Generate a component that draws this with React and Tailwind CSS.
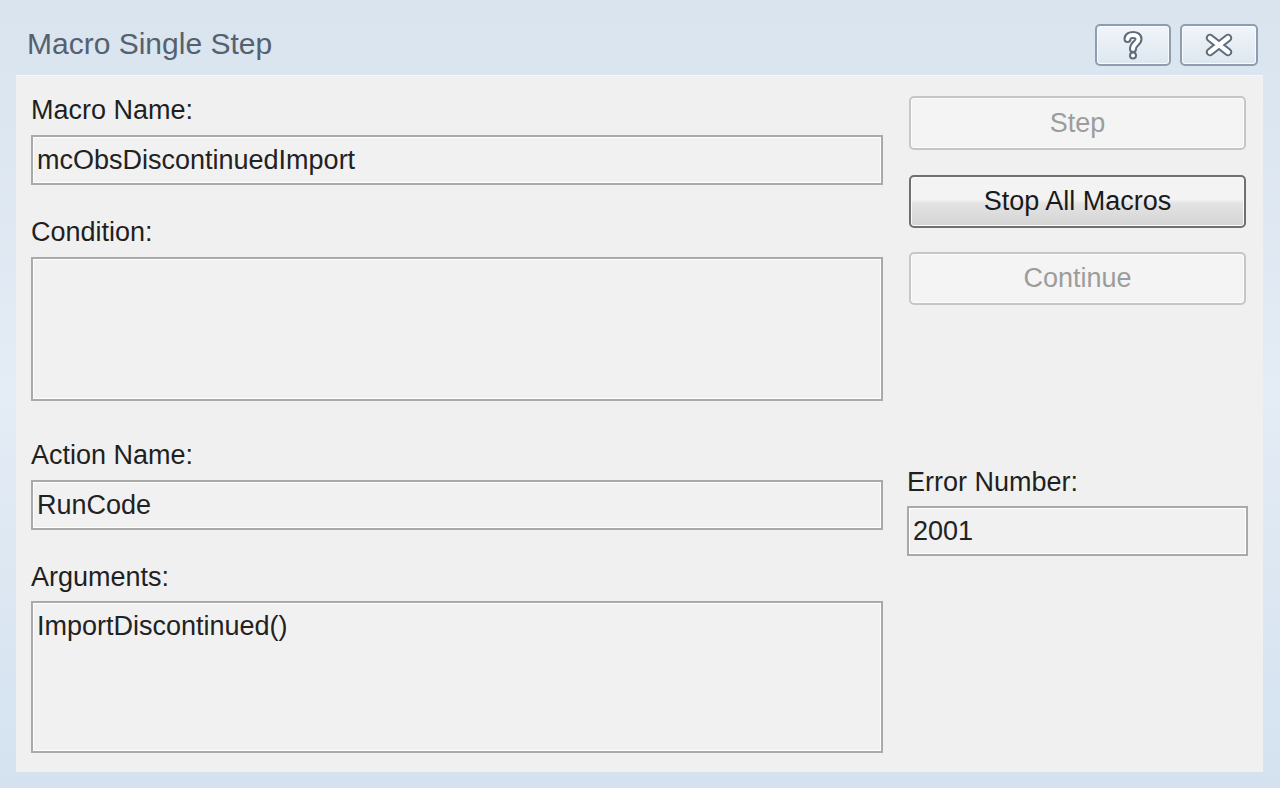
import React from 'react';

const font = { fontFamily: '"Liberation Sans", Arial, sans-serif' };

function Label({ children, className = '' }) {
  return (
    <div className={`text-[27px] leading-[32px] text-[#1f1f1f] ${className}`}>{children}</div>
  );
}

function Field({ value, className = '', multiline = false }) {
  return (
    <div
      className={`border-2 border-[#a9a9a9] bg-[#f1f1f1] shadow-[inset_1px_1px_0_#ffffff,inset_-1px_-1px_0_#ffffff] px-[4px] text-[27px] leading-[32px] text-[#222] ${
        multiline ? 'pt-[7px]' : 'flex items-center'
      } ${className}`}
    >
      {value}
    </div>
  );
}

function Button({ children, disabled, className = '' }) {
  return disabled ? (
    <div
      className={`flex items-center justify-center rounded-[5px] border-2 border-[#c4c7ca] bg-[#f4f4f4] shadow-[inset_0_0_0_1px_#fbfbfb] text-[27px] text-[#9c9c9c] ${className}`}
    >
      {children}
    </div>
  ) : (
    <div
      className={`flex items-center justify-center rounded-[5px] border-2 border-[#6f6f6f] bg-gradient-to-b from-[#f3f3f3] from-45% via-[#e3e3e3] via-55% to-[#d4d4d4] shadow-[inset_0_0_0_1px_#fafafa] text-[27px] text-[#1a1a1a] ${className}`}
    >
      {children}
    </div>
  );
}

function TitleButton({ children }) {
  return (
    <div className="flex h-[42px] items-center justify-center rounded-[5px] border-2 border-[#8f9db0] bg-gradient-to-b from-[#f1f5f9] to-[#dde6ef] shadow-[inset_0_0_0_1px_#f8fbfd]">
      {children}
    </div>
  );
}

export default function App() {
  return (
    <div
      style={font}
      className="flex h-[788px] w-[1280px] flex-col bg-gradient-to-b from-[#d9e4ef] via-[#e4ecf5] to-[#d4e2f0] overflow-hidden"
    >
      {/* barra de título */}
      <div className="flex h-[75px] shrink-0 items-start justify-between">
        <div className="pl-[27px] pt-[26px] text-[30px] leading-[36px] text-[#55616e]">Macro Single Step</div>
        <div className="mr-[22px] mt-[24px] flex gap-[9px]">
          <div className="w-[76px]">
            <TitleButton>
              <svg width="26" height="32" viewBox="0 0 26 32">
                <g fill="none" strokeLinecap="round" strokeLinejoin="round">
                  <path d="M7.5 10 C7.5 4.5 18.5 4.5 18.5 10 C18.5 14.5 13 14 13 20" stroke="#5d6b7b" strokeWidth="8" />
                  <path d="M7.5 10 C7.5 4.5 18.5 4.5 18.5 10 C18.5 14.5 13 14 13 20" stroke="#ffffff" strokeWidth="4" />
                  <path d="M13 26.5 L13 26.6" stroke="#5d6b7b" strokeWidth="8" />
                  <path d="M13 26.5 L13 26.6" stroke="#ffffff" strokeWidth="4" />
                </g>
              </svg>
            </TitleButton>
          </div>
          <div className="w-[78px]">
            <TitleButton>
              <svg width="32" height="26" viewBox="0 0 32 26">
                <g fill="none" strokeLinecap="round">
                  <path d="M7 6 L25 20 M25 6 L7 20" stroke="#5d6b7b" strokeWidth="8.5" />
                  <path d="M7 6 L25 20 M25 6 L7 20" stroke="#ffffff" strokeWidth="4.5" />
                </g>
              </svg>
            </TitleButton>
          </div>
        </div>
      </div>

      {/* área cliente */}
      <div className="ml-[16px] flex h-[697px] w-[1247px] shrink-0 bg-[#f0f0f0] pl-[15px] shadow-[inset_0_1px_0_#f8f8f8]">
        <div className="flex w-[852px] flex-col pt-[19px]">
          <Label>Macro Name:</Label>
          <Field className="mt-[9px] h-[50px]" value="mcObsDiscontinuedImport" />
          <Label className="mt-[31px]">Condition:</Label>
          <Field className="mt-[9px] h-[144px]" multiline value="" />
          <Label className="mt-[38px]">Action Name:</Label>
          <Field className="mt-[9px] h-[50px]" value="RunCode" />
          <Label className="mt-[31px]">Arguments:</Label>
          <Field className="mt-[8px] h-[152px]" multiline value="ImportDiscontinued()" />
        </div>

        <div className="ml-[24px] flex w-[341px] flex-col pt-[21px]">
          <Button disabled className="ml-[2px] h-[54px] w-[337px]">Step</Button>
          <Button className="ml-[2px] mt-[25px] h-[53px] w-[337px]">Stop All Macros</Button>
          <Button disabled className="ml-[2px] mt-[24px] h-[53px] w-[337px]">Continue</Button>
          <Label className="mt-[161px]">Error Number:</Label>
          <Field className="mt-[8px] h-[50px]" value="2001" />
        </div>
      </div>
    </div>
  );
}
